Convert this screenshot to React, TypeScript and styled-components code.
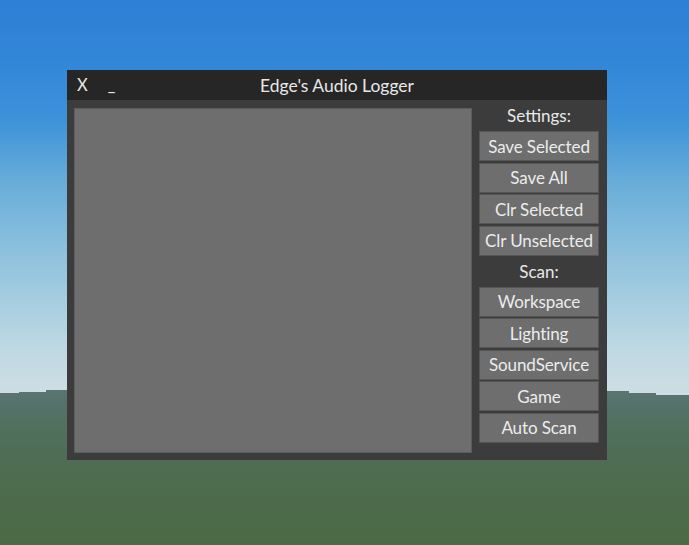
import React from "react";
import styled, { createGlobalStyle } from "styled-components";

const SKY_EDGE = "#cddde3";

const Global = createGlobalStyle`
  html, body {
    margin: 0;
    padding: 0;
    width: 689px;
    height: 545px;
    overflow: hidden;
  }
  body {
    background-color: #4c6a46;
    background-repeat: no-repeat;
    background-image:
      linear-gradient(${SKY_EDGE}, ${SKY_EDGE}),
      linear-gradient(${SKY_EDGE}, ${SKY_EDGE}),
      linear-gradient(${SKY_EDGE}, ${SKY_EDGE}),
      linear-gradient(${SKY_EDGE}, ${SKY_EDGE}),
      linear-gradient(${SKY_EDGE}, ${SKY_EDGE}),
      linear-gradient(
        to bottom,
        #2e7fd6 0px,
        #3286d8 60px,
        #3e92d9 120px,
        #66acd9 180px,
        #84bcdc 235px,
        #a3cce0 295px,
        #bfd9e3 350px,
        ${SKY_EDGE} 390px,
        #5a7672 390px,
        #55716a 405px,
        #51705c 430px,
        #4e6c50 470px,
        #4b6a44 545px
      );
    background-position:
      0 390px,
      19px 390px,
      600px 390px,
      629px 390px,
      656px 390px,
      0 0;
    background-size:
      19px 3px,
      27px 2px,
      29px 1px,
      27px 3px,
      33px 5px,
      100% 100%;
    font-family: Lato, "Open Sans", sans-serif;
  }
`;

const Page = styled.div`
  width: 689px;
  height: 545px;
  box-sizing: border-box;
  padding: 70px 0 0 67px;
`;

const Window = styled.div`
  width: 540px;
  height: 390px;
  display: flex;
  flex-direction: column;
  background: #3c3c3c;
`;

const TitleBar = styled.div`
  height: 30px;
  flex: none;
  background: #262626;
  display: grid;
  grid-template-columns: 1fr auto 1fr;
  align-items: center;
  color: #e8e8e8;
  font-size: 17.5px;
`;

const TitleControls = styled.div`
  display: flex;
  align-items: center;
  gap: 20px;
  padding-left: 10px;
`;

const Control = styled.span`
  display: inline-block;
  font-size: 16.5px;
  line-height: 1;
`;

const Title = styled.div`
  text-align: center;
  padding-top: 1px;
`;

const Body = styled.div`
  flex: 1;
  display: flex;
  gap: 7px;
  padding: 0 8px 7px 7px;
`;

const LogPanel = styled.div`
  margin-top: 7.7px;
  flex: 1;
  background: #6e6e6e;
  border: 1px solid #5c5c5c;
`;

const Sidebar = styled.div`
  width: 120px;
  flex: none;
  display: flex;
  flex-direction: column;
`;

const Label = styled.div`
  height: 31px;
  display: flex;
  align-items: center;
  justify-content: center;
  color: #e8e8e8;
  font-size: 17px;
`;

const Button = styled.div`
  height: 30px;
  box-sizing: border-box;
  background: #6e6e6e;
  border: 1px solid #565656;
  display: flex;
  align-items: center;
  justify-content: center;
  color: #ececec;
  font-size: 17px;
  letter-spacing: -0.1px;
  & + & {
    margin-top: 1.5px;
  }
`;

const settings = ["Save Selected", "Save All", "Clr Selected", "Clr Unselected"];
const scans = ["Workspace", "Lighting", "SoundService", "Game", "Auto Scan"];

export default function App() {
  return (
    <>
      <Global />
      <Page>
        <Window>
          <TitleBar>
            <TitleControls>
              <Control>X</Control>
              <Control>_</Control>
            </TitleControls>
            <Title>Edge's Audio Logger</Title>
            <div />
          </TitleBar>
          <Body>
            <LogPanel />
            <Sidebar>
              <Label>Settings:</Label>
              {settings.map((s) => (
                <Button key={s}>{s}</Button>
              ))}
              <Label>Scan:</Label>
              {scans.map((s) => (
                <Button key={s}>{s}</Button>
              ))}
            </Sidebar>
          </Body>
        </Window>
      </Page>
    </>
  );
}
